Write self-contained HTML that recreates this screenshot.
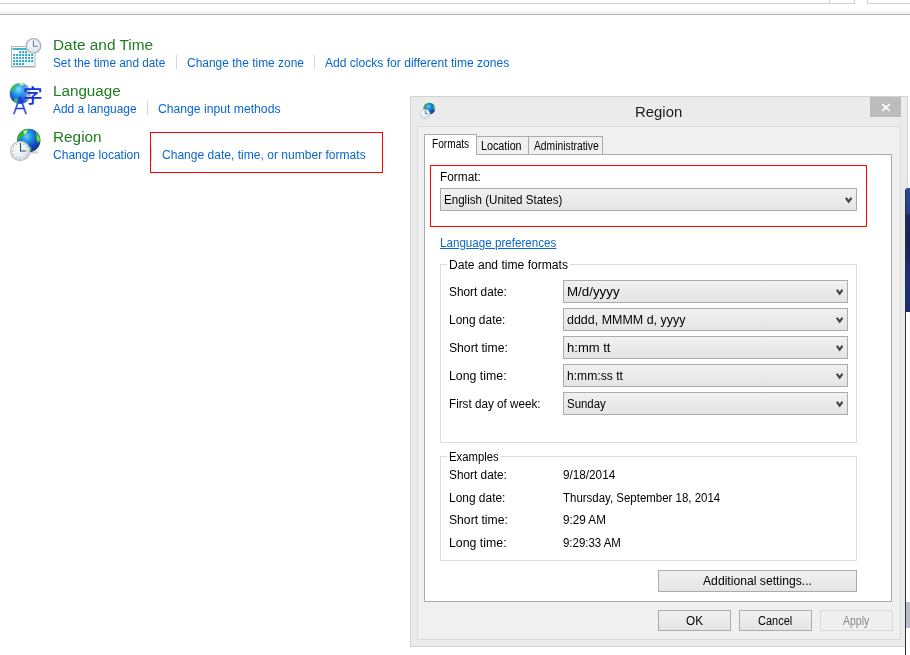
<!DOCTYPE html>
<html lang="en">
<head>
<meta charset="utf-8">
<title>Region</title>
<style>
html,body{margin:0;padding:0;background:#fff;}
body{width:910px;height:655px;position:relative;overflow:hidden;font-family:"Liberation Sans",sans-serif;}
.a{position:absolute;box-sizing:border-box;}
.t{position:absolute;white-space:nowrap;transform-origin:0 50%;font-family:"Liberation Sans",sans-serif;}
.cb{position:absolute;border:1px solid #acacac;background:linear-gradient(#f1f1f1,#e4e4e4);}
.chev{position:absolute;right:3.2px;top:7.7px;}
.btn{position:absolute;border:1px solid #acacac;background:linear-gradient(#f0f0f0,#e5e5e5);}
.btn.dis{border-color:#d9d9d9;background:#efefef;}
.sep{position:absolute;width:1px;background:#d6d6d6;}
.gb{position:absolute;border:1px solid #dcdcdc;box-sizing:border-box;}
.gl{position:absolute;background:#fff;height:3px;}
</style>
</head>
<body>
<!-- top toolbar remnants -->
<div class="a" style="left:0;top:3px;width:855px;height:1px;background:#d2d2d2"></div>
<div class="a" style="left:829px;top:0;width:1px;height:4px;background:#d2d2d2"></div>
<div class="a" style="left:854px;top:0;width:1px;height:4px;background:#d2d2d2"></div>
<div class="a" style="left:867px;top:0;width:1px;height:4px;background:#d2d2d2"></div>
<div class="a" style="left:867px;top:3px;width:43px;height:1px;background:#d2d2d2"></div>
<div class="a" style="left:0;top:11px;width:910px;height:3px;background:linear-gradient(#fafbfc,#eceef2)"></div>
<div class="a" style="left:0;top:14px;width:910px;height:1px;background:#b4b4b4"></div>

<!-- control panel separators -->
<div class="sep" style="left:176px;top:55px;height:14px"></div>
<div class="sep" style="left:314px;top:55px;height:14px"></div>
<div class="sep" style="left:147px;top:101px;height:14px"></div>
<div class="sep" style="left:151px;top:147px;height:14px;background:#dcdcdc"></div>

<!-- red highlight (left) -->
<div class="a" style="left:150px;top:132px;width:233px;height:41px;border:1px solid #ff0000"></div>

<!-- dialog -->
<div class="a" style="left:410px;top:96px;width:498px;height:551px;background:#ebebeb;border:1px solid #d3d3d3"></div>
<div class="a" style="left:417px;top:126px;width:484px;height:514px;background:#f0f0f0;border:1px solid #dadada"></div>
<!-- close -->
<div class="a" style="left:870px;top:97px;width:31px;height:20px;background:#bcbcbc"></div>
<svg class="a" style="left:881px;top:103px" width="10" height="9" viewBox="0 0 10 9"><path d="M1.3 1.1 L8.7 7.9 M8.7 1.1 L1.3 7.9" stroke="#fff" stroke-width="1.7" fill="none"/></svg>

<!-- tab panel -->
<div class="a" style="left:424px;top:154px;width:468px;height:448px;background:#fff;border:1px solid #acacac"></div>
<!-- inactive tabs -->
<div class="a" style="left:476px;top:136px;width:53px;height:19px;background:#f0f0f0;border:1px solid #acacac;border-bottom-color:#acacac"></div>
<div class="a" style="left:528px;top:136px;width:75px;height:19px;background:#f0f0f0;border:1px solid #acacac"></div>
<!-- active tab -->
<div class="a" style="left:424px;top:134px;width:53px;height:21px;background:#fff;border:1px solid #acacac;border-bottom:none"></div>

<!-- red highlight (dialog) -->
<div class="a" style="left:430px;top:165px;width:437px;height:62px;border:1px solid #ff0000"></div>

<!-- group boxes -->
<div class="gb" style="left:440px;top:264px;width:417px;height:179px"></div>
<div class="gl" style="left:447px;top:263px;width:123px"></div>
<div class="gb" style="left:440px;top:456px;width:417px;height:105px"></div>
<div class="gl" style="left:447px;top:455px;width:54px"></div>

<div class="cb" style="left:440px;top:188px;width:415px;height:21px"><svg class="chev" width="8" height="7" viewBox="0 0 8 7"><path d="M0 1.5 L1.5 0 L3.65 2.7 L5.8 0 L7.3 1.5 L3.65 6.4 Z" fill="#454545"/></svg></div>
<div class="cb" style="left:563px;top:280px;width:283px;height:21px"><svg class="chev" width="8" height="7" viewBox="0 0 8 7"><path d="M0 1.5 L1.5 0 L3.65 2.7 L5.8 0 L7.3 1.5 L3.65 6.4 Z" fill="#454545"/></svg></div>
<div class="cb" style="left:563px;top:308px;width:283px;height:21px"><svg class="chev" width="8" height="7" viewBox="0 0 8 7"><path d="M0 1.5 L1.5 0 L3.65 2.7 L5.8 0 L7.3 1.5 L3.65 6.4 Z" fill="#454545"/></svg></div>
<div class="cb" style="left:563px;top:336px;width:283px;height:21px"><svg class="chev" width="8" height="7" viewBox="0 0 8 7"><path d="M0 1.5 L1.5 0 L3.65 2.7 L5.8 0 L7.3 1.5 L3.65 6.4 Z" fill="#454545"/></svg></div>
<div class="cb" style="left:563px;top:364px;width:283px;height:21px"><svg class="chev" width="8" height="7" viewBox="0 0 8 7"><path d="M0 1.5 L1.5 0 L3.65 2.7 L5.8 0 L7.3 1.5 L3.65 6.4 Z" fill="#454545"/></svg></div>
<div class="cb" style="left:563px;top:392px;width:283px;height:21px"><svg class="chev" width="8" height="7" viewBox="0 0 8 7"><path d="M0 1.5 L1.5 0 L3.65 2.7 L5.8 0 L7.3 1.5 L3.65 6.4 Z" fill="#454545"/></svg></div>
<div class="btn " style="left:658px;top:570px;width:197px;height:20px"></div>
<div class="btn " style="left:658px;top:610px;width:71px;height:19px"></div>
<div class="btn " style="left:739px;top:610px;width:71px;height:19px"></div>
<div class="btn dis" style="left:820px;top:610px;width:71px;height:19px"></div>

<!-- right-edge overlay -->
<div class="a" style="left:905px;top:188px;width:5px;height:124px;background:linear-gradient(#2a4a9a 0,#27408a 20%,#1c2a62 22%,#1a2458 45%,#20307a 70%,#1c2c74 100%);border-radius:3px 0 0 0"></div>
<div class="a" style="left:905px;top:190px;width:1px;height:465px;background:#2b303b"></div>
<div class="a" style="left:906px;top:312px;width:4px;height:343px;background:#fff"></div>
<div class="a" style="left:906px;top:602px;width:4px;height:26px;background:#b9bccb"></div>

<svg class="a" style="left:0;top:0" width="910" height="655" viewBox="0 0 910 655">
<defs>
  <radialGradient id="gl" cx="0.42" cy="0.32" r="0.75">
    <stop offset="0" stop-color="#5fd4f7"/><stop offset="0.3" stop-color="#1f8fe0"/><stop offset="0.65" stop-color="#1646c0"/><stop offset="1" stop-color="#0e2a8e"/>
  </radialGradient>
  <radialGradient id="gl2" cx="0.42" cy="0.30" r="0.8">
    <stop offset="0" stop-color="#7fe6fb"/><stop offset="0.3" stop-color="#2aa0ea"/><stop offset="0.65" stop-color="#1a50cc"/><stop offset="1" stop-color="#1230a0"/>
  </radialGradient>
  <radialGradient id="cf" cx="0.4" cy="0.35" r="0.75">
    <stop offset="0" stop-color="#fbfcfe"/><stop offset="0.65" stop-color="#e3e9f0"/><stop offset="1" stop-color="#c6d0dc"/>
  </radialGradient>
  <linearGradient id="fade" x1="0" x2="1" y1="0" y2="0">
    <stop offset="0" stop-color="#fff" stop-opacity="1"/><stop offset="0.55" stop-color="#fff" stop-opacity="1"/><stop offset="1" stop-color="#fff" stop-opacity="0.15"/>
  </linearGradient>
  <mask id="mfade"><rect x="8" y="80" width="26" height="28" fill="url(#fade)"/></mask>
  <clipPath id="cg1"><circle cx="20.3" cy="93.5" r="10.6"/></clipPath>
  <clipPath id="cg2"><circle cx="28.7" cy="140.4" r="11.7"/></clipPath>
  <clipPath id="cg3"><circle cx="429.3" cy="108.7" r="5.9"/></clipPath>
</defs>

<!-- Date and Time icon -->
<g>
  <rect x="11.5" y="46.5" width="23.5" height="20.5" fill="#fdfefe" stroke="#b3b5b8" stroke-width="1"/>
  <rect x="12.2" y="66.2" width="22.2" height="0.8" fill="#9a9c9f"/>
  <rect x="12.5" y="48" width="21.5" height="2" fill="#3db4d4"/>
  <rect x="12.5" y="60" width="21.5" height="6" fill="#e9f6fb" opacity="0.8"/>
  <g fill="#1d9fc6">
    <rect x="19.2" y="51.2" width="1.9" height="1.9"/><rect x="22.2" y="51.2" width="1.9" height="1.9"/><rect x="25.2" y="51.2" width="1.9" height="1.9"/>
    <g id="r7"><rect x="13.2" y="54.1" width="1.9" height="1.9"/><rect x="16.2" y="54.1" width="1.9" height="1.9"/><rect x="19.2" y="54.1" width="1.9" height="1.9"/><rect x="22.2" y="54.1" width="1.9" height="1.9"/><rect x="25.2" y="54.1" width="1.9" height="1.9"/><rect x="28.2" y="54.1" width="1.9" height="1.9"/><rect x="31.2" y="54.1" width="1.9" height="1.9"/></g>
    <use href="#r7" y="3"/><use href="#r7" y="6"/>
    <rect x="13.2" y="63.1" width="1.9" height="1.9"/><rect x="16.2" y="63.1" width="1.9" height="1.9"/><rect x="19.2" y="63.1" width="1.9" height="1.9"/><rect x="22.2" y="63.1" width="1.9" height="1.9"/>
  </g>
  <circle cx="33.5" cy="45.9" r="7.3" fill="url(#cf)" stroke="#aab3c2" stroke-width="1.3"/>
  <path d="M33.4 40.4 V46.2 H37.8" fill="none" stroke="#5f7f9f" stroke-width="1.1"/>
</g>

<!-- Language icon -->
<g>
  <g mask="url(#mfade)">
    <circle cx="20.3" cy="93.5" r="10.6" fill="url(#gl2)"/>
    <g clip-path="url(#cg1)" fill="#3cc23c">
      <path d="M10.5 88.5 Q12 85 15 84 Q17.5 84 16.5 86.5 Q15 88 14 90 Q12.5 91.5 11.2 91 Q10.3 90 10.5 88.5Z" opacity="0.9"/>
      <path d="M19 83 Q23 82.5 24.5 84.5 Q22 86 20 85.2Z" fill="#d8f08a"/>
      <path d="M14 99 Q16.5 97.5 18.5 99.5 Q19.5 102.5 18 105 Q15.5 104.5 14.5 102Z"/>
      <path d="M26.5 86 Q29.5 88 30 92 Q28 92.5 26.5 90.5Z"/>
      <path d="M27 95 Q29.5 95 30 98 Q28.5 100.5 26.5 99Z" fill="#8fe06a"/>
    </g>
  </g>
  <text x="12.6" y="113.6" font-family="'DejaVu Sans','Liberation Sans',sans-serif" font-weight="200" font-size="23.2" fill="#1440e4" stroke="#1440e4" stroke-width="0.35" textLength="14.8" lengthAdjust="spacingAndGlyphs">A</text>
  <text x="22.9" y="102.6" font-family="'Noto Sans CJK SC','Noto Sans CJK JP','WenQuanYi Zen Hei',sans-serif" font-size="19.5" font-weight="500" fill="#1232e2">字</text>
</g>

<!-- Region icon -->
<g>
  <ellipse cx="33" cy="152.3" rx="6" ry="1.6" fill="#c9c2b8" opacity="0.7"/>
  <circle cx="28.7" cy="140.4" r="11.7" fill="url(#gl)"/>
  <g clip-path="url(#cg2)">
    <path d="M17 137 Q18 131.5 23 129.5 Q27 128 28.5 130 Q26 132.5 24.5 134.5 Q22.5 135 21.5 137.5 Q19.5 140 17.5 140Z" fill="#2fb52f"/>
    <path d="M23.5 131.5 Q26 129.5 27.5 130.5 Q26.5 133.5 24 134.5Z" fill="#e3f3a0"/>
    <path d="M36 131 Q40.5 134 40.6 140 Q39.5 143.5 37.5 142.5 Q35.8 139 36.2 135.5Z" fill="#38c030"/>
    <path d="M37.3 135 Q39.5 137 39 141 Q37.5 141.5 37 138.5Z" fill="#7fe048"/>
    <path d="M29 146 Q31.5 146.5 31.5 149.5 Q30.5 151.5 29 151.5Z" fill="#2fb52f"/>
  </g>
  <circle cx="20.2" cy="151" r="9.6" fill="url(#cf)" stroke="#bcc3cb" stroke-width="1.2"/>
  <g stroke="#9aa6b2" stroke-width="0.8">
    <path d="M20.2 142.8v1.4M20.2 157.8v1.4M12 151h1.4M27 151h1.4M24.3 143.9l-.6 1.1M16.1 143.9l.6 1.1M24.3 158.1l-.6-1.1M16.1 158.1l.6-1.1M27.3 146.9l-1.1.6M13.1 146.9l1.1.6M27.3 155.1l-1.1-.6M13.1 155.1l1.1-.6"/>
  </g>
  <path d="M20.5 143.2 V151 H25.8" fill="none" stroke="#234e66" stroke-width="1.1"/>
</g>

<!-- title bar icon -->
<g>
  <circle cx="429.3" cy="108.7" r="5.9" fill="url(#gl)"/>
  <g clip-path="url(#cg3)">
    <path d="M423.4 107 Q424 104 426.5 103 Q428.5 102.6 429 103.5 Q427.5 105 426.5 106 Q425 107.5 424 108.5Z" fill="#35bb35"/>
    <path d="M433.2 104.5 Q435.2 106 435.2 109 Q434.5 110.5 433.6 110 Q432.9 107.5 433.2 104.5Z" fill="#5fd03c"/>
    <path d="M429.5 111.5 Q431 112 430.8 113.8 Q430 114.5 429.5 114.3Z" fill="#35bb35"/>
  </g>
  <circle cx="425" cy="113.9" r="4.7" fill="url(#cf)" stroke="#c3c9d0" stroke-width="0.8"/>
  <path d="M425.4 110.4 V113.7 H427.4" fill="none" stroke="#3a5f74" stroke-width="0.9"/>
</g>
</svg>


<span class="t" style="left:53.2px;top:35px;font-size:15.5px;line-height:19px;color:#1e7d1e;transform-origin:0 15px;transform:scale(0.9929,1);">Date and Time</span>
<span class="t" style="left:52.9px;top:56px;font-size:12px;line-height:15px;color:#0a66cc;transform:scaleX(0.9835);">Set the time and date</span>
<span class="t" style="left:186.5px;top:56px;font-size:12px;line-height:15px;color:#0a66cc;transform:scaleX(0.9964);">Change the time zone</span>
<span class="t" style="left:324.9px;top:56px;font-size:12px;line-height:15px;color:#0a66cc;transform:scaleX(1.0060);">Add clocks for different time zones</span>
<span class="t" style="left:53.2px;top:81px;font-size:15.5px;line-height:19px;color:#1e7d1e;transform-origin:0 15px;transform:scale(0.9816,1);">Language</span>
<span class="t" style="left:52.7px;top:102px;font-size:12px;line-height:15px;color:#0a66cc;transform:scaleX(0.9943);">Add a language</span>
<span class="t" style="left:157.7px;top:102px;font-size:12px;line-height:15px;color:#0a66cc;transform:scaleX(1.0145);">Change input methods</span>
<span class="t" style="left:53.2px;top:127px;font-size:15.5px;line-height:19px;color:#1e7d1e;transform-origin:0 15px;transform:scale(0.9893,1);">Region</span>
<span class="t" style="left:52.9px;top:148px;font-size:12px;line-height:15px;color:#0a66cc;transform:scaleX(1.0031);">Change location</span>
<span class="t" style="left:161.5px;top:148px;font-size:12px;line-height:15px;color:#0a66cc;transform:scaleX(1.0046);">Change date, time, or number formats</span>
<span class="t" style="left:634.9px;top:102px;font-size:15.5px;line-height:19px;color:#1c1c1c;transform-origin:0 15px;transform:scale(0.9608,1);">Region</span>
<span class="t" style="left:431.5px;top:137px;font-size:12px;line-height:15px;color:#000;transform:scaleX(0.8452);">Formats</span>
<span class="t" style="left:480.8px;top:139px;font-size:12px;line-height:15px;color:#000;transform:scaleX(0.8948);">Location</span>
<span class="t" style="left:533.6px;top:139px;font-size:12px;line-height:15px;color:#000;transform:scaleX(0.8586);">Administrative</span>
<span class="t" style="left:439.9px;top:170px;font-size:12px;line-height:15px;color:#000;transform:scaleX(0.9868);">Format:</span>
<span class="t" style="left:443.7px;top:193px;font-size:12px;line-height:15px;color:#000;transform:scaleX(0.9647);">English (United States)</span>
<span class="t" style="left:439.7px;top:236px;font-size:12px;line-height:15px;color:#0a66cc;transform:scaleX(0.9692);text-decoration:underline;">Language preferences</span>
<span class="t" style="left:448.5px;top:258px;font-size:12px;line-height:15px;color:#000;transform:scaleX(1.0079);">Date and time formats</span>
<span class="t" style="left:448.5px;top:285px;font-size:12px;line-height:15px;color:#000;transform:scaleX(0.9861);">Short date:</span>
<span class="t" style="left:566.8px;top:285px;font-size:12px;line-height:15px;color:#000;transform:scaleX(1.1110);">M/d/yyyy</span>
<span class="t" style="left:448.5px;top:313px;font-size:12px;line-height:15px;color:#000;transform:scaleX(0.9944);">Long date:</span>
<span class="t" style="left:566.8px;top:313px;font-size:12px;line-height:15px;color:#000;transform:scaleX(1.0392);">dddd, MMMM d, yyyy</span>
<span class="t" style="left:448.5px;top:341px;font-size:12px;line-height:15px;color:#000;transform:scaleX(1.0132);">Short time:</span>
<span class="t" style="left:566.8px;top:341px;font-size:12px;line-height:15px;color:#000;transform:scaleX(1.0871);">h:mm tt</span>
<span class="t" style="left:448.5px;top:369px;font-size:12px;line-height:15px;color:#000;transform:scaleX(1.0277);">Long time:</span>
<span class="t" style="left:566.8px;top:369px;font-size:12px;line-height:15px;color:#000;transform:scaleX(1.0101);">h:mm:ss tt</span>
<span class="t" style="left:448.5px;top:397px;font-size:12px;line-height:15px;color:#000;transform:scaleX(0.9731);">First day of week:</span>
<span class="t" style="left:566.8px;top:397px;font-size:12px;line-height:15px;color:#000;transform:scaleX(0.9532);">Sunday</span>
<span class="t" style="left:448.5px;top:450px;font-size:12px;line-height:15px;color:#000;transform:scaleX(0.9433);">Examples</span>
<span class="t" style="left:448.5px;top:468px;font-size:12px;line-height:15px;color:#000;transform:scaleX(0.9861);">Short date:</span>
<span class="t" style="left:562.9px;top:468px;font-size:12px;line-height:15px;color:#000;transform:scaleX(0.9777);">9/18/2014</span>
<span class="t" style="left:448.5px;top:491px;font-size:12px;line-height:15px;color:#000;transform:scaleX(0.9944);">Long date:</span>
<span class="t" style="left:562.9px;top:491px;font-size:12px;line-height:15px;color:#000;transform:scaleX(0.9554);">Thursday, September 18, 2014</span>
<span class="t" style="left:448.5px;top:513px;font-size:12px;line-height:15px;color:#000;transform:scaleX(1.0132);">Short time:</span>
<span class="t" style="left:562.9px;top:513px;font-size:12px;line-height:15px;color:#000;transform:scaleX(0.9743);">9:29 AM</span>
<span class="t" style="left:448.5px;top:536px;font-size:12px;line-height:15px;color:#000;transform:scaleX(1.0277);">Long time:</span>
<span class="t" style="left:562.9px;top:536px;font-size:12px;line-height:15px;color:#000;transform:scaleX(0.9536);">9:29:33 AM</span>
<span class="t" style="left:702.5px;top:574px;font-size:12px;line-height:15px;color:#000;transform:scaleX(1.0148);">Additional settings...</span>
<span class="t" style="left:685.7px;top:614px;font-size:12px;line-height:15px;color:#000;transform:scaleX(0.9802);">OK</span>
<span class="t" style="left:758.0px;top:614px;font-size:12px;line-height:15px;color:#000;transform:scaleX(0.9154);">Cancel</span>
<span class="t" style="left:842.6px;top:614px;font-size:12px;line-height:15px;color:#8a8a8a;transform:scaleX(0.8724);">Apply</span>
</body>
</html>
